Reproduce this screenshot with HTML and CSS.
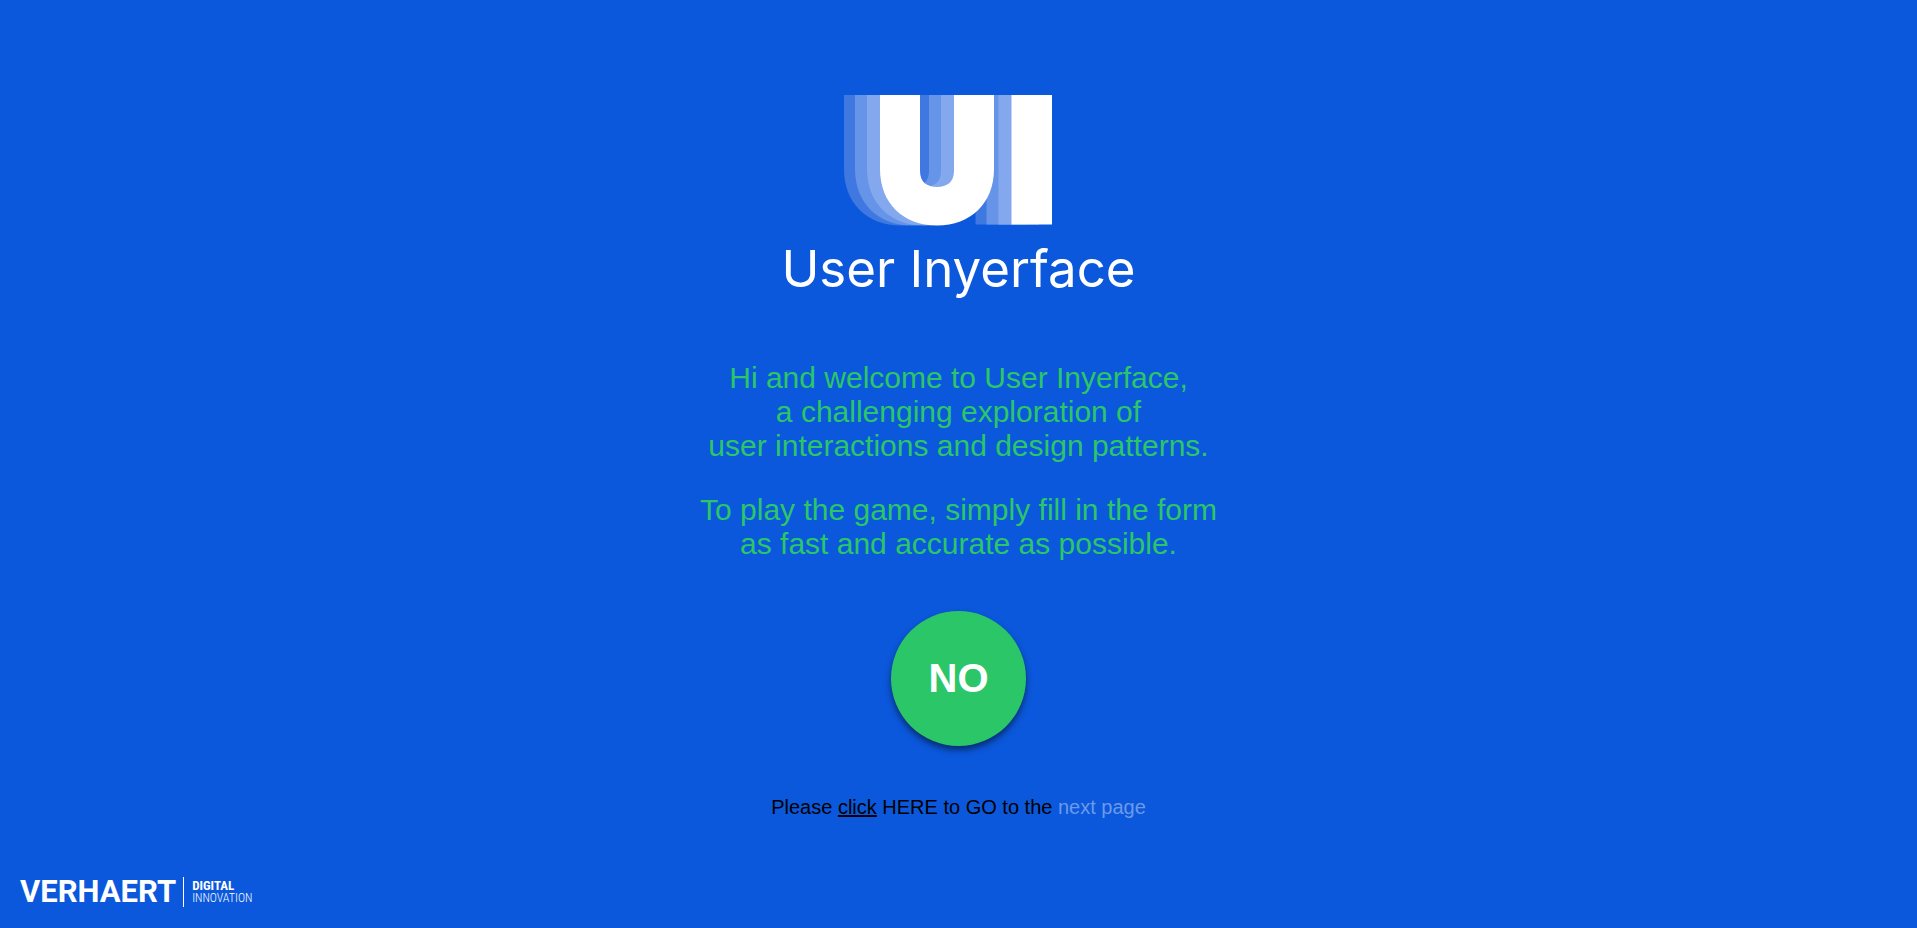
FILE: index.html
```html
<!DOCTYPE html>
<html lang="en">
<head>
<meta charset="utf-8">
<title>User Inyerface</title>
<link rel="stylesheet" href="styles.css">
</head>
<body>
<main class="start">
  <svg class="logo" viewBox="0 0 208 132" aria-hidden="true">
    <defs>
      <g id="mark">
        <path d="M0 0H40V76C40 87 47 92 57 92S74 87 74 76V0H114V74C114 108 91 130.500 57 130.500S0 108 0 74Z"/>
        <rect x="131.500" width="40.500" height="129.500"/>
      </g>
    </defs>
    <use href="#mark" x="0" fill="#3f78e0"/>
    <use href="#mark" x="11" fill="#6694e9"/>
    <use href="#mark" x="23" fill="#84a8ee"/>
    <use href="#mark" x="36" fill="#fff"/>
  </svg>
  <h1 class="title">User Inyerface</h1>
  <p class="intro">Hi and welcome to User Inyerface,<br>a challenging exploration of<br>user interactions and design patterns.</p>
  <p class="intro">To play the game, simply fill in the form<br>as fast and accurate as possible.</p>
  <button class="no" type="button">NO</button>
  <p class="next">Please <span class="underlined">click</span> HERE to GO to the <a class="link" href="#next">next page</a></p>
</main>
<footer class="brand">
  <span class="brand-name">VERHAERT</span>
  <span class="brand-unit"><strong class="brand-strong">DIGITAL</strong><span>INNOVATION</span></span>
</footer>
</body>
</html>
```
FILE: styles.css
```css
* { box-sizing: border-box; }
body {
  margin: 0;
  min-height: 100vh;
  display: flex;
  flex-direction: column;
  justify-content: space-between;
  background: #0b58dc;
  color: #fff;
  font-family: "Liberation Sans", Arial, sans-serif;
}
.start {
  display: flex;
  flex-direction: column;
  align-items: center;
  padding-top: 95px;
  text-align: center;
}
.logo {
  width: 208px;
  height: 132px;
  margin-right: 22px;
}
.title {
  margin: 12px 0 62px;
  font: 400 51px/60px Inter, sans-serif;
}
.intro {
  margin: 0 0 30px;
  color: #2bc668;
  font-size: 30px;
  line-height: 34px;
}
.no {
  width: 135px;
  height: 135px;
  margin-top: 20px;
  padding: 0 0 2px;
  border: 0;
  border-radius: 50%;
  background: #2bc668;
  box-shadow: 0 4px 6px rgba(0, 0, 0, 0.5);
  color: #fff;
  font: bold 40px/46px "Liberation Sans", Arial, sans-serif;
}
.next {
  margin: 49px 0 0;
  color: #000;
  font-size: 20px;
  line-height: 24px;
}
.underlined { text-decoration: underline; }
.link {
  color: #6c9aea;
  text-decoration: none;
}
.brand {
  display: flex;
  align-items: center;
  gap: 7px;
  padding: 0 20px 20px;
  font-family: Roboto, sans-serif;
}
.brand-name {
  font-size: 31px;
  font-weight: 700;
  line-height: 32px;
}
.brand-unit {
  display: flex;
  flex-direction: column;
  padding: 2px 0 2px 8px;
  border-left: 1px solid #fff;
  font-family: "Roboto Condensed", "Liberation Sans Narrow", sans-serif;
  font-size: 12px;
  font-weight: 300;
  line-height: 13px;
}
.brand-strong {
  font-size: 13px;
  font-weight: 700;
}
```
